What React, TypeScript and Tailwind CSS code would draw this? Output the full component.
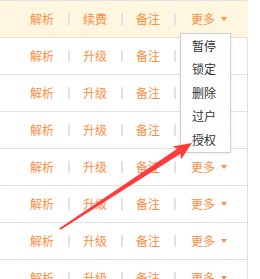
import React from 'react'

const rows = [
  ['解析', '续费', '备注'],
  ['解析', '升级', '备注'],
  ['解析', '升级', '备注'],
  ['解析', '升级', '备注'],
  ['解析', '升级', '备注'],
  ['解析', '升级', '备注'],
  ['解析', '升级', '备注'],
  ['解析', '升级', '备注'],
]

const menuItems = ['暂停', '锁定', '删除', '过户', '授权']

function Sep() {
  return <span className="ml-[14px] mr-[13px] h-[12px] w-[2px] bg-[#e2e2e2]" />
}

export default function App() {
  return (
    <div
      className="relative h-[279px] w-[260px] overflow-hidden bg-white text-[12px] leading-none text-[#ff8c40]"
      style={{ fontFamily: '"Noto Sans CJK SC", "Noto Sans", sans-serif' }}
    >
      <div className="w-[248px] border-t border-[#e2e2e2]">
        {rows.map((r, i) => (
          <div
            key={i}
            className={
              i === 0
                ? 'flex h-[37px] items-center border-b border-[#e2e2e2] bg-[#fff6e0] pl-[30px]'
                : 'flex h-[37px] items-center border-b border-r border-[#e2e2e2] pl-[30px]'
            }
          >
            <span>{r[0]}</span>
            <Sep />
            <span>{r[1]}</span>
            <Sep />
            <span>{r[2]}</span>
            <Sep />
            <span className="ml-[2px]">更多</span>
            <span className="ml-[6px] h-0 w-0 border-x-[3px] border-t-[4px] border-x-transparent border-t-[#ff8c40]" />
          </div>
        ))}
      </div>

      {/* dropdown opened from the first row */}
      <div className="absolute left-[180px] top-[33px] w-[51px] border border-[#cfcfcf] bg-white text-[#333] shadow-[0_1px_3px_rgba(0,0,0,0.08)]">
        {menuItems.map((m) => (
          <div key={m} className="flex h-[23.5px] items-center pl-[11px]">
            {m}
          </div>
        ))}
      </div>

      <svg className="pointer-events-none absolute left-0 top-0" width="260" height="279" viewBox="0 0 260 279">
        <polygon
          points="59.4,228.2 177.3,148.8 172.5,146.5 192,143 181.2,159.2 180.5,153.8 60.6,229.8"
          fill="#ff3b3b"
        />
      </svg>
    </div>
  )
}
